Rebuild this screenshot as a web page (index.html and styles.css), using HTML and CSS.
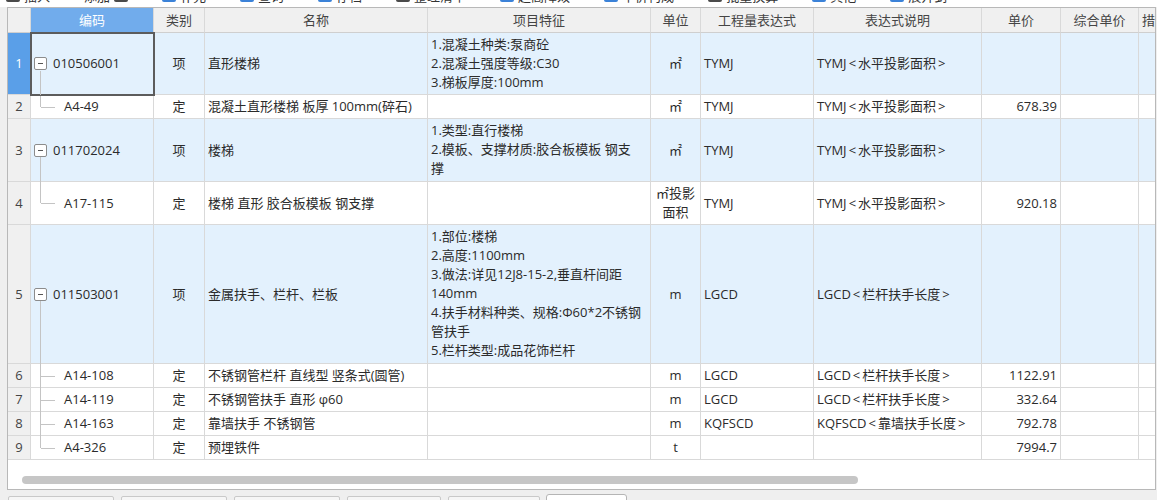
FILE: index.html
```html
<!DOCTYPE html>
<html lang="zh-CN">
<head>
<meta charset="utf-8">
<title>清单定额</title>
<link rel="stylesheet" href="styles.css">
</head>
<body>
<div class="toolbar">
  <span class="tb-item"><i class="ic ic-dark"></i>插入</span>
  <span class="tb-item">添加 <i class="ic ic-dark"></i></span>
  <span class="tb-item"><i class="ic ic-blue"></i>补充</span>
  <span class="tb-item"><i class="ic ic-blue"></i>查询</span>
  <span class="tb-item"><i class="ic ic-blue"></i>存档</span>
  <span class="tb-item"><i class="ic ic-dark"></i>整理清单</span>
  <span class="tb-item"><i class="ic ic-blue"></i>超高降效</span>
  <span class="tb-item"><i class="ic ic-blue"></i>单价构成</span>
  <span class="tb-item"><i class="ic ic-dark"></i>批量换算</span>
  <span class="tb-item"><i class="ic ic-blue"></i>其他</span>
  <span class="tb-item"><i class="ic ic-blue"></i>展开到</span>
</div>

<div class="panel">
  <div class="row head">
    <div class="c hd rn"></div>
    <div class="c hd sel">编码</div>
    <div class="c hd">类别</div>
    <div class="c hd">名称</div>
    <div class="c hd">项目特征</div>
    <div class="c hd">单位</div>
    <div class="c hd">工程量表达式</div>
    <div class="c hd">表达式说明</div>
    <div class="c hd">单价</div>
    <div class="c hd">综合单价</div>
    <div class="c hd left">措施项目</div>
  </div>

  <div class="row hl">
    <div class="c rn rn-sel">1</div>
    <div class="c code parent cur"><span class="box"></span>010506001</div>
    <div class="c ctr">项</div>
    <div class="c">直形楼梯</div>
    <div class="c"><div>1.混凝土种类:泵商砼<br>2.混凝土强度等级:C30<br>3.梯板厚度:100mm</div></div>
    <div class="c ctr">㎡</div>
    <div class="c">TYMJ</div>
    <div class="c">TYMJ<span class="ang">&lt;</span>水平投影面积<span class="ang">&gt;</span></div>
    <div class="c r"></div>
    <div class="c r"></div>
    <div class="c"></div>
  </div>

  <div class="row">
    <div class="c rn">2</div>
    <div class="c code child last">A4-49</div>
    <div class="c ctr">定</div>
    <div class="c">混凝土直形楼梯 板厚 100mm(碎石)</div>
    <div class="c"></div>
    <div class="c ctr">㎡</div>
    <div class="c">TYMJ</div>
    <div class="c">TYMJ<span class="ang">&lt;</span>水平投影面积<span class="ang">&gt;</span></div>
    <div class="c r">678.39</div>
    <div class="c r"></div>
    <div class="c"></div>
  </div>

  <div class="row hl">
    <div class="c rn">3</div>
    <div class="c code parent"><span class="box"></span>011702024</div>
    <div class="c ctr">项</div>
    <div class="c">楼梯</div>
    <div class="c tall"><div>1.类型:直行楼梯<br>2.模板、支撑材质:胶合板模板 钢支<br>撑</div></div>
    <div class="c ctr">㎡</div>
    <div class="c">TYMJ</div>
    <div class="c">TYMJ<span class="ang">&lt;</span>水平投影面积<span class="ang">&gt;</span></div>
    <div class="c r"></div>
    <div class="c r"></div>
    <div class="c"></div>
  </div>

  <div class="row">
    <div class="c rn">4</div>
    <div class="c code child last">A17-115</div>
    <div class="c ctr">定</div>
    <div class="c">楼梯 直形 胶合板模板 钢支撑</div>
    <div class="c"></div>
    <div class="c ctr"><div>㎡投影<br>面积</div></div>
    <div class="c">TYMJ</div>
    <div class="c">TYMJ<span class="ang">&lt;</span>水平投影面积<span class="ang">&gt;</span></div>
    <div class="c r">920.18</div>
    <div class="c r"></div>
    <div class="c"></div>
  </div>

  <div class="row hl">
    <div class="c rn">5</div>
    <div class="c code parent"><span class="box"></span>011503001</div>
    <div class="c ctr">项</div>
    <div class="c">金属扶手、栏杆、栏板</div>
    <div class="c tall"><div>1.部位:楼梯<br>2.高度:1100mm<br>3.做法:详见12J8-15-2,垂直杆间距<br>140mm<br>4.扶手材料种类、规格:Φ60*2不锈钢<br>管扶手<br>5.栏杆类型:成品花饰栏杆</div></div>
    <div class="c ctr">m</div>
    <div class="c">LGCD</div>
    <div class="c">LGCD<span class="ang">&lt;</span>栏杆扶手长度<span class="ang">&gt;</span></div>
    <div class="c r"></div>
    <div class="c r"></div>
    <div class="c"></div>
  </div>

  <div class="row">
    <div class="c rn">6</div>
    <div class="c code child">A14-108</div>
    <div class="c ctr">定</div>
    <div class="c">不锈钢管栏杆 直线型 竖条式(圆管)</div>
    <div class="c"></div>
    <div class="c ctr">m</div>
    <div class="c">LGCD</div>
    <div class="c">LGCD<span class="ang">&lt;</span>栏杆扶手长度<span class="ang">&gt;</span></div>
    <div class="c r">1122.91</div>
    <div class="c r"></div>
    <div class="c"></div>
  </div>

  <div class="row">
    <div class="c rn">7</div>
    <div class="c code child">A14-119</div>
    <div class="c ctr">定</div>
    <div class="c">不锈钢管扶手 直形 φ60</div>
    <div class="c"></div>
    <div class="c ctr">m</div>
    <div class="c">LGCD</div>
    <div class="c">LGCD<span class="ang">&lt;</span>栏杆扶手长度<span class="ang">&gt;</span></div>
    <div class="c r">332.64</div>
    <div class="c r"></div>
    <div class="c"></div>
  </div>

  <div class="row">
    <div class="c rn">8</div>
    <div class="c code child">A14-163</div>
    <div class="c ctr">定</div>
    <div class="c">靠墙扶手 不锈钢管</div>
    <div class="c"></div>
    <div class="c ctr">m</div>
    <div class="c">KQFSCD</div>
    <div class="c">KQFSCD<span class="ang">&lt;</span>靠墙扶手长度<span class="ang">&gt;</span></div>
    <div class="c r">792.78</div>
    <div class="c r"></div>
    <div class="c"></div>
  </div>

  <div class="row">
    <div class="c rn">9</div>
    <div class="c code child last">A4-326</div>
    <div class="c ctr">定</div>
    <div class="c">预埋铁件</div>
    <div class="c"></div>
    <div class="c ctr">t</div>
    <div class="c"></div>
    <div class="c"></div>
    <div class="c r">7994.7</div>
    <div class="c r"></div>
    <div class="c"></div>
  </div>

  <div class="hscroll"><div class="thumb"></div></div>
</div>

<div class="tabs">
  <span class="tab w105">工料机显示</span>
  <span class="tab w105">单价构成</span>
  <span class="tab w105">标准换算</span>
  <span class="tab w93">换算信息</span>
  <span class="tab w92">安装费用</span>
  <span class="tab active">特征及内容</span>
</div>
</body>
</html>
```

FILE: styles.css
```css
* {
  box-sizing: border-box;
  margin: 0;
  padding: 0;
}

html,
body {
  width: 1157px;
  height: 500px;
  overflow: hidden;
}

body {
  background: #efefef;
  font-family: "Open Sans", "Noto Sans CJK SC", sans-serif;
  font-size: 13px;
  color: #2b2b2b;
}

/* ---------- toolbar (mostly scrolled off the top) ---------- */
.toolbar {
  height: 7px;
  overflow: hidden;
  background: #fff;
  display: flex;
  align-items: flex-end;
  gap: 34px;
  padding-left: 6px;
}

.tb-item {
  flex: none;
  display: flex;
  align-items: center;
  gap: 4px;
  height: 24px;
  white-space: nowrap;
  color: #333;
}

.ic {
  display: block;
  width: 14px;
  height: 14px;
  border-radius: 2px;
}

.ic-blue {
  background: #3b82d8;
}

.ic-dark {
  background: #4a4a4a;
}

/* ---------- grid panel ---------- */
.panel {
  margin-left: 7px;
  width: 1149px;
  border: 1px solid #b8b8b8;
  background: #fff;
  overflow: hidden;
}

.row {
  display: grid;
  grid-template-columns: 23px 123px 51px 223px 223px 50px 113px 168px 79px 78px 80px;
  width: 1211px;
}

.row.hl {
  background: #e3f1fd;
}

.c {
  position: relative;
  display: flex;
  align-items: center;
  padding: 2px 3px;
  line-height: 19px;
  white-space: nowrap;
  border-right: 1px solid #d9d9d9;
  border-bottom: 1px solid #d9d9d9;
  color: #2b2b2b;
}

.c.tall {
  padding-bottom: 3px;
}

.ang {
  padding: 0 2px;
}

.ctr {
  justify-content: center;
  text-align: center;
}

.r {
  justify-content: flex-end;
}

/* header */
.hd {
  justify-content: center;
  padding-top: 3px;
  background: #f0f0f0;
  color: #444;
  border-bottom-color: #cfcfcf;
}

.hd.left {
  justify-content: flex-start;
}

.hd.sel {
  background: #71acec;
  color: #fff;
}

/* row numbers */
.rn {
  justify-content: center;
  background: #f0f0f0;
  color: #444;
  padding-left: 0;
  padding-right: 0;
}

.rn-sel {
  background: #5a9fe8;
  color: #fff;
}

/* selected cell */
.cur {
  outline: 2px solid #5c5c5c;
  outline-offset: -1px;
  z-index: 1;
}

/* tree column */
.box {
  position: relative;
  display: block;
  flex: none;
  width: 13px;
  height: 13px;
  margin-right: 6px;
  border: 1px solid #8c8c8c;
  border-radius: 2px;
  background: #fff;
}

.box::after {
  content: "";
  position: absolute;
  left: 3px;
  top: 5px;
  width: 5px;
  height: 1px;
  background: #555;
}

.code.parent::after {
  content: "";
  position: absolute;
  left: 9px;
  top: calc(50% + 7px);
  bottom: -1px;
  width: 1px;
  background: #c4c4c4;
}

.code.child {
  padding-left: 33px;
}

.code.child::before {
  content: "";
  position: absolute;
  left: 9px;
  top: -1px;
  bottom: -1px;
  width: 1px;
  background: #c4c4c4;
}

.code.child.last::before {
  bottom: 50%;
}

.code.child::after {
  content: "";
  position: absolute;
  left: 10px;
  top: 50%;
  width: 14px;
  height: 1px;
  background: #c4c4c4;
}

/* horizontal scroll area */
.hscroll {
  height: 29px;
  padding-top: 16px;
  padding-left: 14px;
  background: #fff;
}

.thumb {
  width: 836px;
  height: 8px;
  border-radius: 4px;
  background: #c6c6c6;
}

/* ---------- bottom tabs ---------- */
.tabs {
  display: flex;
  align-items: flex-start;
  gap: 7px;
  padding-left: 8px;
  padding-top: 4px;
}

.tab {
  flex: none;
  height: 24px;
  margin-top: 2px;
  padding-top: 6px;
  border: 1px solid #c9c9c9;
  border-radius: 2px 2px 0 0;
  background: #f6f6f6;
  color: #333;
  text-align: center;
  white-space: nowrap;
  line-height: 18px;
}

.w105 {
  width: 106px;
}

.w93 {
  width: 94px;
}

.w92 {
  width: 92px;
}

.tab.active {
  width: 81px;
  margin-top: 0;
  margin-left: -1px;
  background: #fff;
  border-color: #b5b5b5;
  border-radius: 3px 3px 0 0;
}
```
